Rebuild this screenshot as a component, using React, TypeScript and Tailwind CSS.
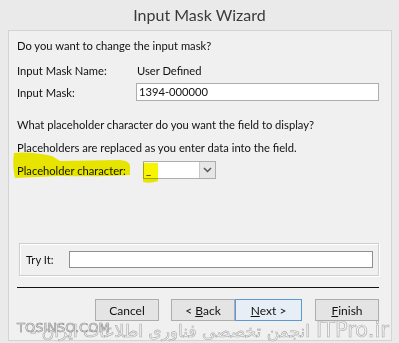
import React from "react";

const ui = { fontFamily: 'Lato, "Liberation Sans", Arial, sans-serif' };

const Btn = ({ children, focus }: { children: React.ReactNode; focus?: boolean }) => (
  <div
    className={`h-[22px] flex items-center justify-center text-[12px] text-[#111] ${
      focus ? "w-[67px] border border-[#5a9ad6] bg-[#e8eef5]" : "w-[64px] border border-[#adadad] bg-[#e4e4e4]"
    }`}
  >
    {children}
  </div>
);

export default function App() {
  return (
    <div className="relative w-[399px] h-[343px] bg-[#e9eae9] overflow-hidden" style={ui}>
      <div className="h-[30px] flex items-center justify-center text-[16px] text-[#3a3a3a]">Input Mask Wizard</div>

      <div className="ml-[8px] w-[384px] h-[311px] border border-[#d4d4d4] bg-[#f0f0f0] pl-[8px] pt-[7px] text-[11.2px] leading-[15px] text-[#111]">
        <div>Do you want to change the input mask?</div>

        <div className="mt-[10px] flex">
          <span className="w-[120px]">Input Mask Name:</span>
          <span>User Defined</span>
        </div>

        <div className="mt-[5px] flex items-center h-[18px]">
          <span className="w-[119px]">Input Mask:</span>
          <div className="w-[243px] h-[18px] border border-[#abadb3] bg-white pl-[2px] leading-[16px]">1394-000000</div>
        </div>

        <div className="mt-[16px]">What placeholder character do you want the field to display?</div>
        <div className="mt-[8px]">Placeholders are replaced as you enter data into the field.</div>

        <div className="mt-[6px] flex items-center h-[18px]">
          <span className="w-[126px]">Placeholder character:</span>
          <div className="flex w-[73px] h-[18px] border border-[#abadb3] bg-white">
            <div className="flex-1 pl-[2px] leading-[16px]">_</div>
            <div className="w-[16px] h-full border-l border-[#c8c8c8] bg-[#e6e6e6] flex items-center justify-center">
              <svg width="9" height="6" viewBox="0 0 9 6">
                <path d="M1 1 L4.5 4.5 L8 1" fill="none" stroke="#555" strokeWidth="1.5" />
              </svg>
            </div>
          </div>
        </div>

        <div className="mt-[64px] ml-[2px] w-[360px] h-[33px] border border-[#cfcfcf] shadow-[inset_1px_1px_0_#fff,1px_1px_0_#fff] flex items-center pl-[6px]">
          <span className="w-[43px]">Try It:</span>
          <div className="w-[304px] h-[17px] border border-[#8f8f8f] bg-white" />
        </div>

        <div className="mt-[11px] w-[362px] h-px bg-[#111]" />

        <div className="mt-[11px] w-[362px] flex justify-end">
          <Btn>Cancel</Btn>
          <div className="ml-[12px]">
            <Btn>
              &lt; <span className="underline ml-[3px]">B</span>ack
            </Btn>
          </div>
          <Btn focus>
            <span className="underline">N</span>ext &gt;
          </Btn>
          <div className="ml-[13px]">
            <Btn>
              <span className="underline">F</span>inish
            </Btn>
          </div>
        </div>
      </div>

      {/* marker highlight */}
      <svg className="absolute left-0 top-0 mix-blend-multiply pointer-events-none" width="399" height="343">
        <path
          d="M14 153 Q30 151 52 156 L60 161 L120 160 Q130 161 130 166 L130 175 Q100 177 60 176 L15 178 Q12 166 14 153 Z"
          fill="#f6f400"
        />
        <path d="M143 163 L158 163 L158 181 Q150 184 143 182 Z" fill="#f6f400" />
      </svg>

      {/* watermark */}
      <div
        className="absolute right-[10px] top-[318px] flex items-baseline whitespace-nowrap text-[#f4f4f4] [-webkit-text-stroke:0.6px_#a8a8a8]"
        style={{ fontFamily: '"DejaVu Sans", sans-serif' }}
      >
        <span dir="rtl" className="text-[17px] leading-[24px]">
          انجمن تخصصی فناوری اطلاعات ایران -
        </span>
        <span className="ml-[6px] text-[21px] leading-[24px]">ITPro.ir</span>
      </div>
      <div
        className="absolute left-[17px] top-[320px] text-[13px] leading-[16px] text-[#f4f4f4] [-webkit-text-stroke:0.6px_#8a8a8a] whitespace-nowrap"
        style={{ fontFamily: '"DejaVu Sans", sans-serif' }}
      >
        TOSINSO.COM
      </div>
    </div>
  );
}
